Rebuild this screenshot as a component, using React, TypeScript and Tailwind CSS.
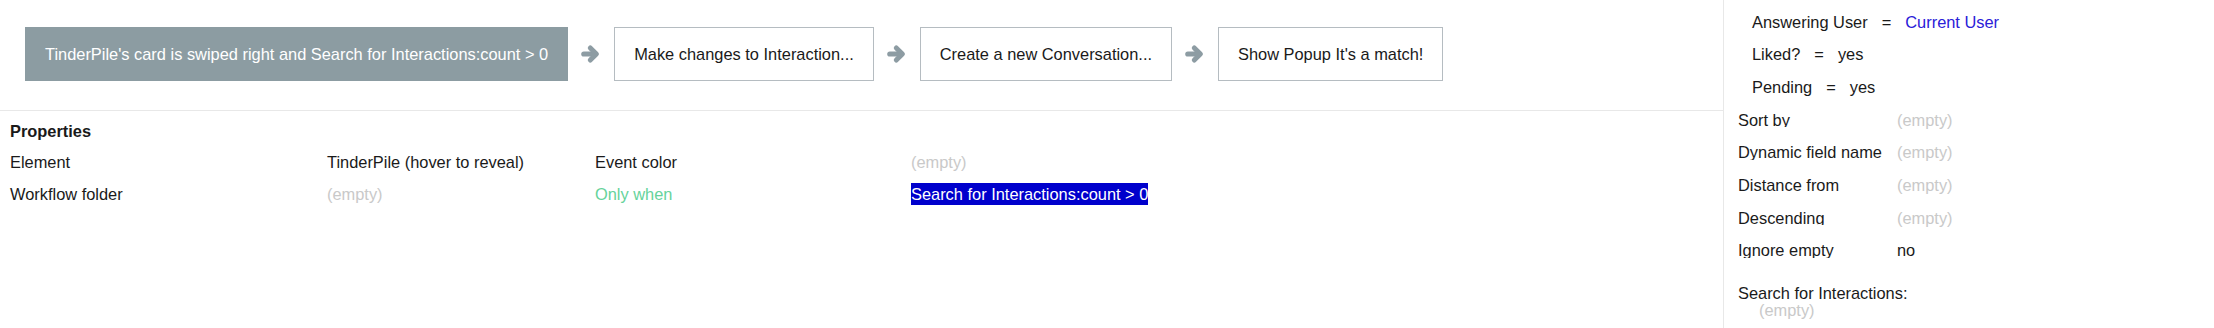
import React from 'react';

function Arrow() {
  return (
    <div className="mx-[13px] flex h-[20px] w-[20px] shrink-0 items-center justify-center">
      <svg width="20" height="20" viewBox="0 0 20 20" fill="none">
        <path d="M2.8 10 H13.5" stroke="#8d9ca3" strokeWidth="5.2" strokeLinecap="round" />
        <path d="M9.3 4 L15.4 10 L9.3 16" stroke="#8d9ca3" strokeWidth="5" strokeLinecap="round" strokeLinejoin="round" />
      </svg>
    </div>
  );
}

function Step({ label, active }: { label: string; active?: boolean }) {
  return (
    <div
      className={
        active
          ? 'flex h-[54px] shrink-0 items-center whitespace-nowrap border border-[#8c9ca2] bg-[#8c9ca2] px-[19px] text-white'
          : 'flex h-[54px] shrink-0 items-center whitespace-nowrap border border-[#b5bcc1] bg-white px-[19px] text-[#1a1a1a]'
      }
    >
      {label}
    </div>
  );
}

function Constraint({ field, value, blue }: { field: string; value: string; blue?: boolean }) {
  return (
    <div className="flex h-[32.7px] items-start pl-[14px] leading-[18px]">
      <span>{field}</span>
      <span className="mx-[14px]">=</span>
      <span className={blue ? 'text-[#2a20d8]' : ''}>{value}</span>
    </div>
  );
}

function Field({ label, value }: { label: string; value?: string }) {
  return (
    <div className="flex h-[32.7px] items-start leading-[18px]">
      <div className="h-[16.5px] w-[159px] shrink-0 overflow-hidden">{label}</div>
      <div className={value ? 'text-[#1a1a1a]' : 'text-[#c9c9c9]'}>{value ?? '(empty)'}</div>
    </div>
  );
}

export default function App() {
  return (
    <div
      className="flex h-[328px] w-[2214px] overflow-hidden bg-white text-[16.4px] text-[#1a1a1a]"
      style={{ fontFamily: '"Liberation Sans", Arial, sans-serif' }}
    >
      <div className="flex w-[1723px] shrink-0 flex-col">
        <div className="flex h-[111px] items-start border-b border-[#e8e8e8] pl-[25px] pt-[27px]">
          <Step active label="TinderPile's card is swiped right and Search for Interactions:count > 0" />
          <div className="flex h-[54px] items-center">
            <Arrow />
          </div>
          <Step label="Make changes to Interaction..." />
          <div className="flex h-[54px] items-center">
            <Arrow />
          </div>
          <Step label="Create a new Conversation..." />
          <div className="flex h-[54px] items-center">
            <Arrow />
          </div>
          <Step label="Show Popup It's a match!" />
        </div>

        <div className="pl-[10px] pt-[11px] leading-[18px]">
          <div className="h-[31px] font-bold">Properties</div>
          <div className="grid grid-cols-[317px_268px_316px_auto]">
            <div className="h-[32px]">Element</div>
            <div>TinderPile (hover to reveal)</div>
            <div>Event color</div>
            <div className="text-[#c9c9c9]">(empty)</div>

            <div>Workflow folder</div>
            <div className="text-[#c9c9c9]">(empty)</div>
            <div className="text-[#66d39b]">Only when</div>
            <div>
              <span className="bg-[#0000cc] py-[2px] text-white">Search for Interactions:count &gt; 0</span>
            </div>
          </div>
        </div>
      </div>

      <div className="flex-1 border-l border-[#e8e8e8] pl-[14px] pt-[12.5px]">
        <Constraint field="Answering User" value="Current User" blue />
        <Constraint field="Liked?" value="yes" />
        <Constraint field="Pending" value="yes" />
        <Field label="Sort by" />
        <Field label="Dynamic field name" />
        <Field label="Distance from" />
        <Field label="Descending" />
        <Field label="Ignore empty" value="no" />
        <div className="mt-[11px] leading-[17px]">Search for Interactions:</div>
        <div className="pl-[21px] leading-[17px] text-[#c9c9c9]">(empty)</div>
      </div>
    </div>
  );
}
